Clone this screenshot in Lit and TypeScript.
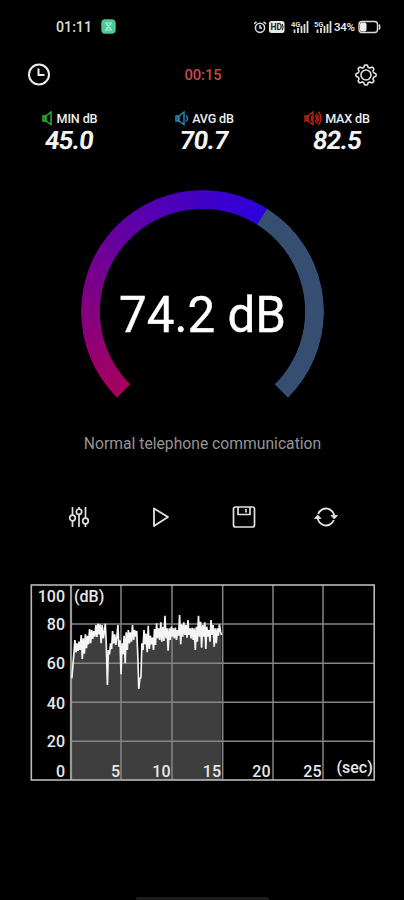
import { LitElement, html, svg, css } from "lit";
import { customElement } from "lit/decorators.js";

const LEVEL = 74.2;
const SWEEP = (LEVEL / 120) * 270;

// Sound level trace: one sample per pixel column, in thirds of a pixel below the chart origin.
const TRACE = [
  310, 275, 235, 195, 232, 205, 228, 200, 225, 180, 252, 190, 236, 178, 220, 182, 208, 162, 205, 165, 192, 168, 185, 150, 186,
  146, 178, 148, 205, 150, 190, 172, 146, 210, 330, 225, 238, 205, 222, 168, 205, 178, 210, 188, 150, 215, 196, 298, 205, 238,
  182, 265, 172, 225, 165, 205, 172, 200, 150, 195, 165, 185, 168, 240, 342, 310, 308, 205, 225, 165, 208, 176, 232, 152, 222,
  182, 208, 188, 225, 162, 210, 145, 190, 160, 195, 142, 200, 155, 198, 122, 190, 160, 227, 160, 195, 155, 185, 160, 190, 158,
  195, 165, 182, 120, 208, 148, 185, 142, 180, 150, 188, 135, 180, 160, 190, 158, 195, 160, 225, 155, 200, 122, 185, 140, 218,
  150, 185, 142, 222, 155, 185, 165, 200, 135, 180, 150, 215, 160, 205, 160, 182, 148, 170, 180,
];
const tracePoints = TRACE.map((v, i) => `${(71.8 + (i * 149.7) / (TRACE.length - 1)).toFixed(1)},${(575 + v / 3).toFixed(1)}`);
const traceLine = "M" + tracePoints.join("L");
const traceArea = `${traceLine}V780H71Z`;

@customElement("app-root")
export class AppRoot extends LitElement {
  static styles = css`
    :host { display: block; width: 404px; height: 900px; overflow: hidden; background: #000; color: #eee; font-family: Roboto, "Liberation Sans", sans-serif; }
    * { box-sizing: border-box; }
    svg { display: block; fill: none; flex: none; }
    .screen { display: flex; flex-direction: column; height: 900px; }
    .status { height: 52px; padding: 1px 23px 0 56px; display: flex; align-items: center; }
    .clock { font-size: 14.2px; font-weight: 500; color: #ddd; width: 45px; }
    .status .right { margin-left: auto; display: flex; align-items: center; }
    .pct { font-size: 11.5px; font-weight: 500; letter-spacing: -.3px; width: 23px; margin-left: -2px; margin-right: 1px; }
    .bar { height: 46px; padding: 0 27px 0 27px; display: flex; align-items: center; justify-content: space-between; }
    .time { font-size: 14.8px; color: #c74a4a; font-weight: 500; letter-spacing: -.1px; }
    .stats { height: 76px; padding-top: 11px; display: grid; grid-template-columns: 139px 131px 134px; }
    .stat { display: flex; flex-direction: column; align-items: center; }
    .name { display: flex; align-items: center; height: 18px; font-size: 12.6px; font-weight: 500; letter-spacing: -.15px; gap: 3px; white-space: nowrap; }
    .value { font: 700 25.5px/27px Roboto, "Liberation Sans", sans-serif; letter-spacing: -.8px; margin-top: 0; color: #f4f4f4; transform: skewX(-7deg); }
    .gauge { width: 243px; height: 243px; margin: 16px 0 0 81px; display: grid; place-items: center; }
    .ring, .reading { grid-area: 1 / 1; }
    .ring { width: 243px; height: 243px; border-radius: 50%; -webkit-mask: radial-gradient(circle, transparent 102.2px, #000 103px); mask: radial-gradient(circle, transparent 102.2px, #000 103px); }
    .reading { font-size: 49.3px; line-height: 60px; color: #fff; white-space: pre; padding-top: 6px; -webkit-text-stroke: .4px #fff; }
    .caption { height: 52px; margin-top: -14px; padding-top: 14px; text-align: center; font-size: 15.7px; line-height: 22px; color: #949494; padding-left: 1px; }
    .tools { height: 92px; padding: 34px 66px 0 67px; display: flex; justify-content: space-between; }
    .chart { margin: 20px 0 0 29px; }
    .chart text { fill: #e8e8e8; font: 500 16px Roboto, "Liberation Sans", sans-serif; }
    .foot { margin: auto 0 0 136px; width: 133px; height: 3px; background: #1c1c1c; border-radius: 2px 2px 0 0; }
  `;

  private speaker(color: string, waves: number) {
    return svg`<g stroke=${color} stroke-width="1.5"><path d="M1 5H4L9 1V13.500L4 10H1Z"/><path d="M3.500 5v5" stroke-width="2.500"/>
      ${waves > 0 ? svg`<path d="M11 4.500q3 3 0 6"/>` : ""}
      ${waves > 1 ? svg`<path d="M12 2.500q5 5 0 10M14.500 .8q5 6.500 0 13M7 5q2 2.500 0 5"/>` : ""}</g>`;
  }

  private stat(name: string, value: string, color: string, waves: number) {
    const w = waves > 1 ? 18 : waves ? 14 : 12;
    return html`<div class="stat">
      <div class="name"><svg width=${w} height="15" viewBox="0 0 ${w} 15">${this.speaker(color, waves)}</svg>${name}</div>
      <div class="value">${value}</div>
    </div>`;
  }

  private signal(label: string) {
    return html`<svg width="18" height="14" viewBox="0 0 18 14">
      <text x="0" y="6.500" font-size="7.500" font-weight="700" fill="#ddd">${label}</text>
      <path d="M3.500 13V9.500M7 13V8M10.500 13V6M13.500 13V4M16.500 13V1" stroke="#ddd" stroke-width="1.800"/></svg>`;
  }

  private gear() {
    const d: string[] = [];
    for (let i = 0; i < 96; i++) {
      const a = (i / 96) * Math.PI * 2;
      const r = 9 + 1.1 * Math.tanh(2.2 * Math.cos(8 * a));
      d.push(`${(11 + r * Math.sin(a)).toFixed(2)} ${(11 - r * Math.cos(a)).toFixed(2)}`);
    }
    return html`<svg width="22" height="22" viewBox="0 0 22 22" stroke="#e4e4e4" stroke-width="1.600">
      <path d="M${d.join("L")}Z"/><circle cx="11" cy="11" r="5"/></svg>`;
  }

  private chart() {
    const xs = [121, 172, 222.7, 273, 323];
    const ys = [624, 663.3, 702.3, 741.3];
    return html`<svg class="chart" width="347" height="199" viewBox="29 583 347 199">
      <path d=${traceArea} fill="#3e3e3e"/>
      <path d="M${xs.map((x) => `${x} 585V780`).join("M")}M${ys.map((y) => `71 ${y}H374`).join("M")}" stroke="#858585" stroke-width="1.500"/>
      <path d="M71 585V780" stroke="#999" stroke-width="2.200"/>
      <path d=${traceLine} stroke="#f4f4f4" stroke-width="1.700" stroke-linejoin="bevel"/>
      <rect x="31.300" y="585" width="342.900" height="195" stroke="#b9b9b9" stroke-width="1.600"/>
      <g text-anchor="end">
        ${[[100, 601.5], [80, 630], [60, 669], [40, 708.5], [20, 747], [0, 776.7]].map(([t, y]) => svg`<text x="65" y=${y}>${t}</text>`)}
        ${[[5, 120], [10, 170.5], [15, 221], [20, 270.5], [25, 321.5]].map(([t, x]) => svg`<text x=${x} y="776.700">${t}</text>`)}
      </g>
      <text x="74" y="602">(dB)</text>
      <text x="336.500" y="773">(sec)</text>
    </svg>`;
  }

  render() {
    return html`<div class="screen">
      <div class="status">
        <span class="clock">01:11</span>
        <svg width="15" height="15" viewBox="0 0 15 15"><rect x=".3" y=".3" width="14.400" height="14.400" rx="4" fill="#4fc79a"/><path d="M4 4h7M4.500 4L10.500 11M10.500 4L4.500 11M4 11h7" stroke="#a5ecd0" stroke-width="1.200"/></svg>
        <div class="right">
          <svg width="14" height="14" viewBox="0 0 14 14" stroke="#ddd" stroke-width="1.500"><circle cx="6" cy="7.800" r="4.600"/><path d="M6 5v3h2M0 4L2.500 1.800M12 4L9.500 1.800"/></svg>
          <svg width="23" height="14" viewBox="0 0 23 14"><rect x="1" y="1" width="15.500" height="12" rx="2.500" fill="#e6e6e6"/><text x="2.500" y="10" font-size="8.500" font-weight="700" fill="#222">HD</text><path d="M14.300 4q1.500 3 0 6" stroke="#222"/></svg>
          ${this.signal("4G")}<svg width="5" height="14"></svg>${this.signal("5G")}<svg width="4" height="14"></svg>
          <span class="pct">34%</span>
          <svg width="23" height="14" viewBox="0 0 23 14"><rect x="1" y="1.500" width="18.500" height="11" rx="3" stroke="#ddd" stroke-width="1.400"/><rect x="2" y="2.500" width="6.500" height="9" rx="2" fill="#eee"/><path d="M21 4.500q1.500 2.500 0 5" stroke="#ddd" stroke-width="1.500"/></svg>
        </div>
      </div>
      <div class="bar">
        <svg width="24" height="24" viewBox="0 0 24 24" stroke="#eee" stroke-width="2"><circle cx="12" cy="11.500" r="10"/><path d="M11.500 5.500V12H17.500"/></svg>
        <span class="time">00:15</span>
        ${this.gear()}
      </div>
      <div class="stats">
        ${this.stat("MIN dB", "45.0", "#2fae35", 0)}
        ${this.stat("AVG dB", "70.7", "#2684b8", 1)}
        ${this.stat("MAX dB", "82.5", "#b92213", 2)}
      </div>
      <div class="gauge">
        <div class="ring" style="background: conic-gradient(from 225deg, #a8005e 0deg, #78008c 62deg, #4c00bb 120deg, #2c00dc ${SWEEP}deg, #364e72 ${SWEEP + 0.4}deg 270deg, transparent 270.4deg)"></div>
        <div class="reading">${LEVEL} dB</div>
      </div>
      <div class="caption">Normal telephone communication</div>
      <div class="tools">
        <svg width="24" height="24" viewBox="0 0 24 24" stroke="#e2e2e2" stroke-width="1.700"><path d="M5.500 2V10M5.500 16V22M12 2V4M12 9.500V22M18.500 2V13M18.500 19V22"/><circle cx="5.500" cy="13" r="2.800"/><circle cx="12" cy="6.700" r="2.700"/><circle cx="18.500" cy="16" r="2.800"/></svg>
        <svg width="24" height="24" viewBox="0 0 24 24" stroke="#e2e2e2" stroke-width="1.800" stroke-linejoin="round"><path d="M5 3.500V21L19 12Z"/></svg>
        <svg width="24" height="24" viewBox="0 0 24 24" stroke="#e2e2e2" stroke-width="1.700" stroke-linejoin="round"><rect x="1.500" y="2" width="21" height="20" rx="2"/><path d="M6 2V9.500H18V2M14 4V7.500"/></svg>
        <svg width="24" height="24" viewBox="0 0 24 24" stroke="#e2e2e2" stroke-width="1.800"><path d="M4.200 9A8.300 8.300 0 0 1 20.300 12M19.800 15A8.300 8.300 0 0 1 3.700 12"/><path d="M17 10.500H23.500L20.300 14ZM.5 13.500H7L3.700 10Z" fill="#e2e2e2" stroke-width=".8"/></svg>
      </div>
      ${this.chart()}
      <div class="foot"></div>
    </div>`;
  }
}
